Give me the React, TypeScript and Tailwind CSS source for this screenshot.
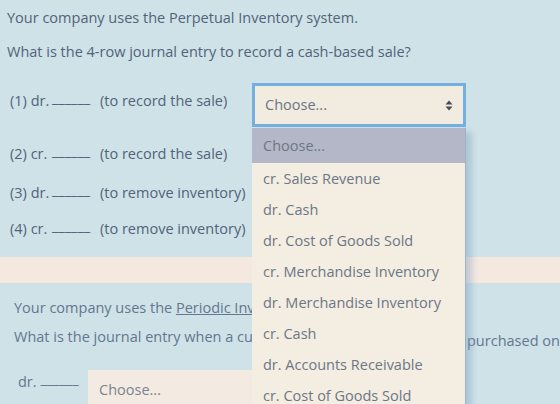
const options = [
  'cr. Sales Revenue',
  'dr. Cash',
  'dr. Cost of Goods Sold',
  'cr. Merchandise Inventory',
  'dr. Merchandise Inventory',
  'cr. Cash',
  'dr. Accounts Receivable',
  'cr. Cost of Goods Sold',
]

function UpDown() {
  return (
    <svg width="8" height="11" viewBox="0 0 8 11" className="shrink-0">
      <path d="M4 0.5 L7.5 4.5 H0.5 Z" fill="#474c57" />
      <path d="M4 10.5 L7.5 6.5 H0.5 Z" fill="#474c57" />
    </svg>
  )
}

function Row({ n, side, note, className }: { n: number; side: string; note: string; className?: string }) {
  return (
    <div className={`flex items-center whitespace-nowrap ${className ?? ''}`}>
      <span className="w-[42px]">
        ({n}) {side}.
      </span>
      <span className="w-[48px] -translate-y-[3px]">______</span>
      <span>{note}</span>
    </div>
  )
}

function App() {
  return (
    <div className="relative h-[404px] w-[560px] overflow-hidden bg-[#cfe2e7] font-['Open_Sans',sans-serif] text-[14.5px] leading-[20px] text-[#52637a]">
      <section className="h-[257px] px-[7px] pt-[8px]">
        <p>Your company uses the Perpetual Inventory system.</p>
        <p className="mt-[14px]">What is the 4-row journal entry to record a cash-based sale?</p>

        <div className="mt-[21px] flex items-center pl-[3px]">
          <Row n={1} side="dr" note="(to record the sale)" className="-mt-[8px] w-[242px]" />
          <div className="relative">
            <div className="flex h-[44px] w-[214px] items-center justify-between border-[3px] border-[#74b0df] bg-[#f2ebdf] pr-[10px] pl-[10px] text-[#6b7585]">
              <span>Choose...</span>
              <UpDown />
            </div>

            {/* open option list */}
            <ul className="absolute top-full left-0 z-10 mt-[1px] w-[214px] border-r border-[#9fb2c2] bg-[#f3ede2] text-[#6d7786] shadow-[6px_4px_6px_rgba(110,150,190,0.35)]">
              <li className="flex h-[35px] items-center bg-[#b3b7c7] px-[11px]">Choose...</li>
              {options.map((o) => (
                <li key={o} className="flex h-[31px] items-center px-[11px]">
                  {o}
                </li>
              ))}
            </ul>
          </div>
        </div>

        <Row n={2} side="cr" note="(to record the sale)" className="mt-[17px] pl-[3px]" />
        <Row n={3} side="dr" note="(to remove inventory)" className="mt-[19px] pl-[3px]" />
        <Row n={4} side="cr" note="(to remove inventory)" className="mt-[16px] pl-[3px]" />
      </section>

      <div className="h-[26px] bg-[#f4e8df]" />

      <section className="px-[14px] pt-[15px] text-[#637790]">
        <p className="w-[238px] overflow-hidden whitespace-nowrap">
          Your company uses the <span className="underline">Periodic Inventory</span> system.
        </p>
        <p className="mt-[9px] flex whitespace-nowrap">
          <span className="w-[238px] shrink-0 overflow-hidden">What is the journal entry when a customer</span>
          <span className="mt-[4px] ml-[215px]">purchased on-</span>
        </p>
        <div className="mt-[19px] flex items-start">
          <span className="mt-[2px] w-[74px] pl-[4px]">
            dr. <span className="relative -top-[3px]">______</span>
          </span>
          <div className="flex h-[40px] w-[164px] items-center bg-[#f3ebe1] px-[11px] text-[#7a8391]">Choose...</div>
        </div>
      </section>
    </div>
  )
}

export default App
